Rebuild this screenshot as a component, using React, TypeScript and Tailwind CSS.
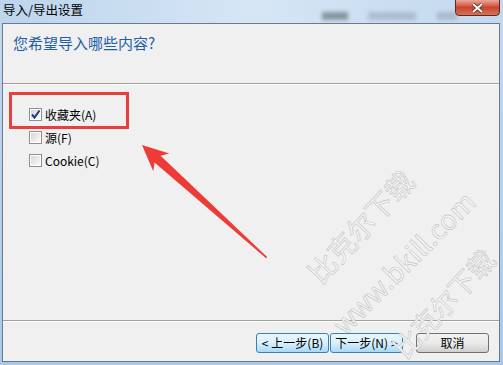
import React from 'react'

const FONT = "font-['Noto_Sans_CJK_SC',_'Noto_Sans',_sans-serif]"

// ─── Win7 style checkbox ──────────────────────────────────────────────────────
function CheckBox({ checked, label }: { checked?: boolean; label: string }) {
  return (
    <div className="h-[23px] flex items-center gap-[3px]">
      <div className="w-[13px] h-[13px] border border-[#8e8f8f] bg-white p-px">
        <div className="w-full h-full bg-gradient-to-br from-[#d6d6d6] to-[#fbfbfb] relative">
          {checked && (
            <svg width="11" height="11" viewBox="0 0 11 11" className="absolute -left-px -top-px">
              <path d="M2 5.5 L4.5 8.5 L9.5 1.5" fill="none" stroke="#1f3a8a" strokeWidth="2" />
            </svg>
          )}
        </div>
      </div>
      <span className="text-[12px] leading-none text-black">{label}</span>
    </div>
  )
}

function WinButton({ children, focused }: { children: React.ReactNode; focused?: boolean }) {
  return (
    <button
      className={`w-[73px] h-[20px] rounded-[3px] border text-[12px] leading-none text-black flex items-center justify-center
        ${focused
          ? 'border-[#3c7fb1] bg-gradient-to-b from-[#eaf6fd] via-[#d9f0fc] to-[#a7d9f5]'
          : 'border-[#707070] bg-gradient-to-b from-[#f2f2f2] via-[#ebebeb] to-[#cfcfcf]'}`}
    >
      {children}
    </button>
  )
}

export default function App() {
  return (
    <div className={`${FONT} w-[503px] h-[365px] relative overflow-hidden flex flex-col bg-gradient-to-b from-[#c3d9f0] to-[#a9c8e8]`}>
      {/* Title bar */}
      <div className="h-[23px] relative flex items-start pl-[3px] pt-[2px] bg-gradient-to-r from-[#bcd4ec] via-[#d6e6f5] to-[#c2d8ee]">
        <span className="text-[12.5px] leading-[16px] text-black">导入/导出设置</span>
        {/* blurred background behind aero glass */}
        <div className="absolute left-[322px] top-[12px] w-[26px] h-[8px] bg-[#55606c] opacity-60 blur-[2px]" />
        <div className="absolute left-[368px] top-[12px] w-[48px] h-[8px] bg-[#7d8a97] opacity-40 blur-[2px]" />
        <div className="absolute left-[437px] top-[12px] w-[20px] h-[8px] bg-[#7d8a97] opacity-40 blur-[2px]" />
        {/* Close button */}
        <div className="absolute left-[455px] top-[-1px] w-[45px] h-[17px] rounded-b-[4px] border border-[#5b2a22] bg-gradient-to-b from-[#e9a89a] via-[#c8452c] to-[#d4725a] flex items-center justify-center">
          <svg width="13" height="10" viewBox="0 0 13 10">
            <path d="M2 1 L11 9 M11 1 L2 9" stroke="#5a2a20" strokeWidth="3.6" />
            <path d="M2 1 L11 9 M11 1 L2 9" stroke="#ffffff" strokeWidth="2" />
          </svg>
        </div>
      </div>

      {/* Client area */}
      <div className="flex-1 ml-[2px] mr-[3px] mb-[3px] border border-[#6d7a88] bg-[#f0f0f0] flex flex-col relative">
        <div className="h-[59px] pl-[10px] pt-[6px]">
          <span className="text-[15px] leading-[20px] text-[#1f5ea8]">您希望导入哪些内容?</span>
        </div>
        <div className="h-px bg-[#a0a0a0]" />
        <div className="h-px bg-white" />

        <div className="flex-1 pl-[26px] pt-[18px] flex flex-col">
          <CheckBox checked label="收藏夹(A)" />
          <CheckBox label="源(F)" />
          <CheckBox label="Cookie(C)" />
        </div>

        <div className="h-px bg-[#a0a0a0]" />
        <div className="h-px bg-white" />
        <div className="h-[39px] pt-[11px] pr-[10px] flex justify-end items-start">
          <WinButton focused>
            <span className="mr-[3px]">&lt;</span>上一步(B)
          </WinButton>
          <div className="w-px" />
          <WinButton focused>
            下一步(N)<span className="ml-[3px]">&gt;</span>
          </WinButton>
          <div className="w-[13px]" />
          <WinButton>取消</WinButton>
        </div>

        {/* Annotation: red box */}
        <div className="absolute left-[6px] top-[68px] w-[120px] h-[37px] border-[3px] border-[#e83e3c]" />
      </div>

      {/* Annotation: red arrow */}
      <svg className="absolute left-0 top-0 pointer-events-none" width="503" height="365">
        <g transform="translate(142,145) rotate(42.1)">
          <polygon points="0,0 26,-12 21,-4.5 168,-0.8 168,0.8 21,4.5 26,12" fill="#ef3b37" />
        </g>
      </svg>

      {/* Watermark */}
      <div className="absolute inset-0 pointer-events-none">
        <span className="absolute left-[360px] top-[226px] -translate-x-1/2 -translate-y-1/2 rotate-[-47deg] whitespace-nowrap text-[28px] leading-none text-[#f7f7f7] [-webkit-text-stroke:0.6px_#c2c2c2]">
          比克尔下载
        </span>
        <span className="absolute left-[403px] top-[262px] -translate-x-1/2 -translate-y-1/2 rotate-[-45deg] whitespace-nowrap text-[27px] leading-none text-[#f7f7f7] [-webkit-text-stroke:0.6px_#c2c2c2]">
          www.bkill.com
        </span>
        <span className="absolute left-[443px] top-[303px] -translate-x-1/2 -translate-y-1/2 rotate-[-47deg] whitespace-nowrap text-[27px] leading-none text-[#f7f7f7] [-webkit-text-stroke:0.6px_#c2c2c2]">
          比克尔下载
        </span>
      </div>
    </div>
  )
}
